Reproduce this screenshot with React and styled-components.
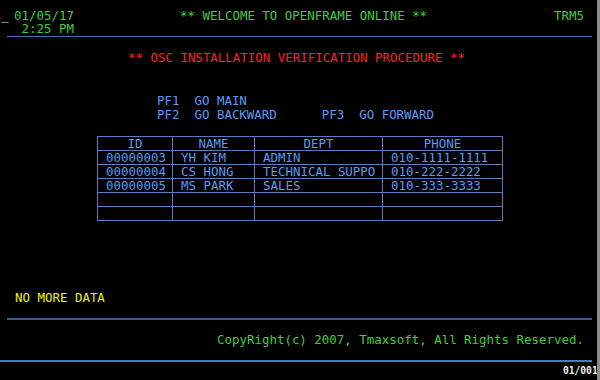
import React from "react";
import styled, { createGlobalStyle } from "styled-components";

const Global = createGlobalStyle`
  html, body { margin: 0; padding: 0; background: #000; }
`;

const Screen = styled.div`
  box-sizing: border-box;
  width: 600px;
  height: 380px;
  padding-top: 9px;
  background: #000;
  border-right: 3px solid #8c8c8c;
  overflow: hidden;
  display: flex;
  flex-direction: column;
  font-family: "DejaVu Sans Mono", "Liberation Mono", monospace;
  font-size: 12.45px;
  line-height: 13px;
  white-space: pre;
`;

const Header = styled.div`
  display: flex;
  align-items: flex-start;
`;

const Cursor = styled.span`
  width: 14px;
  padding-left: 1px;
  box-sizing: border-box;
  color: #e8e8e8;
`;

const DateBlock = styled.div`
  width: 166px;
  display: flex;
  flex-direction: column;
  color: #3ccf3c;
`;

const Welcome = styled.span`
  width: 374px;
  color: #3ccf3c;
`;

const Term = styled.span`
  color: #3ccf3c;
`;

const Rule = styled.div`
  margin-top: ${(p) => p.$top}px;
  margin-left: ${(p) => p.$left}px;
  width: ${(p) => p.$width}px;
  height: ${(p) => p.$thick}px;
  background: ${(p) => p.$color};
  flex-shrink: 0;
`;

const Line = styled.div`
  margin-top: ${(p) => p.$top || 0}px;
  padding-left: ${(p) => p.$left}px;
  color: ${(p) => p.$color};
`;

const Keys = styled.div`
  margin-top: 30px;
  padding-left: 157px;
  color: #5a9cf3;
  line-height: 14px;
`;

const Grid = styled.div`
  margin-top: 14px;
  margin-left: 97px;
  align-self: flex-start;
  display: grid;
  grid-template-columns: 74px 81px 127px 119px;
  grid-auto-rows: 13px;
  gap: 1px;
  padding: 1px;
  background: #5a7cc0;
`;

const Cell = styled.div`
  background: #000;
  color: #5a9cf3;
  padding-left: ${(p) => (p.$head ? 0 : 8)}px;
  text-align: ${(p) => (p.$head ? "center" : "left")};
  line-height: 13px;
  overflow: hidden;
`;

const Page = styled.div`
  margin-top: 3px;
  padding-left: 563px;
  color: #f0f0f0;
  font-size: 9.6px;
  line-height: 12px;
  font-weight: bold;
`;

const columns = ["ID", "NAME", "DEPT", "PHONE"];
const rows = [
  ["00000003", "YH KIM", "ADMIN", "010-1111-1111"],
  ["00000004", "CS HONG", "TECHNICAL SUPPO", "010-222-2222"],
  ["00000005", "MS PARK", "SALES", "010-333-3333"],
  ["", "", "", ""],
  ["", "", "", ""],
];

export default function App() {
  return (
    <>
      <Global />
      <Screen>
        <Header>
          <Cursor>_</Cursor>
          <DateBlock>
            <span>01/05/17</span>
            <span> 2:25 PM</span>
          </DateBlock>
          <Welcome>** WELCOME TO OPENFRAME ONLINE **</Welcome>
          <Term>TRM5</Term>
        </Header>
        <Rule $top={1} $left={7} $width={585} $thick={1} $color="#4a6cb0" />
        <Line $top={14} $left={128} $color="#ff2020">
          ** OSC INSTALLATION VERIFICATION PROCEDURE **
        </Line>
        <Keys>
          <div>PF1  GO MAIN</div>
          <div>PF2  GO BACKWARD      PF3  GO FORWARD</div>
        </Keys>
        <Grid>
          {columns.map((c) => (
            <Cell key={c} $head>
              {c}
            </Cell>
          ))}
          {rows.map((r, i) =>
            r.map((v, j) => <Cell key={i + "-" + j}>{v}</Cell>)
          )}
        </Grid>
        <Line $top={70} $left={15} $color="#f2f200">
          NO MORE DATA
        </Line>
        <Rule $top={14} $left={7} $width={585} $thick={1.5} $color="#3a5796" />
        <Line $top={13} $left={217} $color="#3ccf3c">
          CopyRight(c) 2007, Tmaxsoft, All Rights Reserved.
        </Line>
        <Rule $top={14} $left={0} $width={592} $thick={2} $color="#4a78c8" />
        <Page>01/001</Page>
      </Screen>
    </>
  );
}
